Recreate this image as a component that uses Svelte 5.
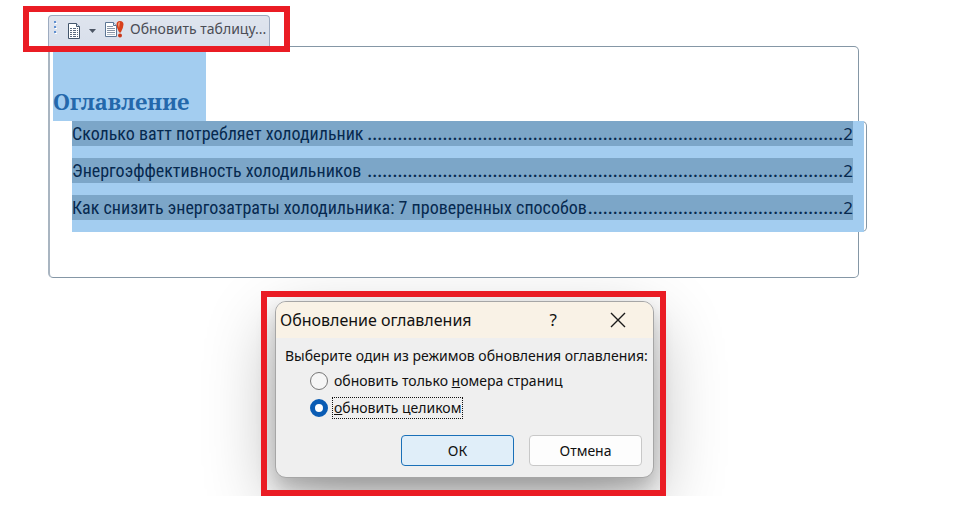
<script>
  import { onMount } from 'svelte';

  const entries = [
    { title: 'Сколько ватт потребляет холодильник', page: 2 },
    { title: 'Энергоэффективность холодильников ', page: 2 },
    { title: 'Как снизить энергозатраты холодильника: 7 проверенных способов', page: 2 },
  ];

  let mode = $state('all');
  let leaderWidths = $state([0, 0, 0]);
  let dotWidth = $state(5);

  // fill the space up to the page number with as many dots as fit
  function dots(width) {
    return '.'.repeat(Math.max(0, Math.floor(width / dotWidth)));
  }

  onMount(() => {
    const ctx = document.createElement('canvas').getContext('2d');
    ctx.font = '500 18px "Roboto Condensed", Roboto, sans-serif';
    dotWidth = ctx.measureText('.'.repeat(100)).width / 100;
  });
</script>

<main>
  <div class="toolbar-row">
    <div class="toolbar">
      <svg class="grip" width="4" height="16" viewBox="0 0 4 16">
        <path d="M1 0h2v2H1zM1 5h2v2H1zM1 10h2v2H1z" fill="#5f8fd0" />
        <path d="M2 2h2v1H2zM2 7h2v1H2zM2 12h2v1H2z" fill="#fff" />
      </svg>
      <button class="tool menu" aria-label="Оглавление">
        <svg width="14" height="16" viewBox="0 0 14 16">
          <path d="M1.5.5h8l3 3v12h-11z" fill="#fff" stroke="#44566c" />
          <path d="M9.5.5v3h3" fill="#dce6f2" stroke="#44566c" />
          <path
            d="M3 5.5h2M6 5.5h3M10 5.5h1M3 7.5h2M6 7.5h3M10 7.5h1M3 9.5h2M6 9.5h3M10 9.5h1M3 11.5h2M6 11.5h3M10 11.5h1M3 13.5h2M6 13.5h3M10 13.5h1"
            stroke="#5c6b80"
          />
        </svg>
        <svg width="7" height="4" viewBox="0 0 7 4">
          <path d="M0 0h7L3.5 4z" fill="#4c5564" />
        </svg>
      </button>
      <button class="tool">
        <svg width="20" height="17" viewBox="0 0 20 17">
          <path d="M1.5 1.5h8l3 3v11h-11z" fill="#fff" stroke="#5c7694" />
          <path d="M9.5 1.5v3h3" fill="#dce6f2" stroke="#5c7694" />
          <path d="M3 5.5h6M3 7.5h8M3 9.5h8M3 11.5h8" stroke="#8794a6" />
          <path d="M3 13.5h8" stroke="#b4bdc8" />
          <path d="M12.5 3.500q0-3.500 3.500-3.500t3.500 3.500q0 3-2.700 8h-1.600q-2.700-5-2.700-8z" fill="#d8401c" />
          <path d="M14 3q0-2 2-2l-1 6q-1-2-1-4z" fill="#f29a78" />
          <circle cx="16" cy="14.500" r="2" fill="#c9381a" />
        </svg>
        <span>Обновить таблицу...</span>
      </button>
    </div>
    <div class="mark toolbar-mark"></div>
  </div>

  <section class="toc">
    <h1>Оглавление</h1>
    <div class="entries">
      <div class="selection">
        {#each entries as entry, i}
          <div class="entry">
            <span class="title">{entry.title}</span>
            <span class="leader" aria-hidden="true" bind:clientWidth={leaderWidths[i]}
              >{dots(leaderWidths[i])}</span
            >
            <span class="page">{entry.page}</span>
          </div>
        {/each}
      </div>
    </div>
  </section>

  <div class="stage">
    <div class="frame">
      <div class="dialog" role="dialog" aria-labelledby="dialog-title">
        <div class="titlebar">
          <h2 id="dialog-title">Обновление оглавления</h2>
          <button class="help">?</button>
          <button class="close" aria-label="Закрыть">
            <svg width="16" height="16" viewBox="0 0 16 16">
              <path d="M1 1l14 14M15 1L1 15" stroke="#1a1a1a" stroke-width="1.4" fill="none" />
            </svg>
          </button>
        </div>
        <fieldset>
          <legend>Выберите один из режимов обновления оглавления:</legend>
          <label>
            <input type="radio" value="pages" bind:group={mode} />
            <span>обновить только <u>н</u>омера страниц</span>
          </label>
          <label>
            <input type="radio" value="all" bind:group={mode} />
            <span class:focused={mode === 'all'}><u>о</u>бновить целиком</span>
          </label>
        </fieldset>
        <div class="actions">
          <button class="primary">ОК</button>
          <button>Отмена</button>
        </div>
      </div>
      <div class="mark"></div>
    </div>
  </div>
</main>

<style>
  :global(body) {
    background: #fff;
  }

  main {
    padding: 15px 101px 10px 48px;
    font-family: 'Noto Sans', sans-serif;
  }

  button {
    font: inherit;
    color: inherit;
    border: 0;
    background: none;
    padding: 0;
  }

  .toolbar-row {
    position: relative;
    width: fit-content;
  }

  .toolbar {
    display: flex;
    align-items: center;
    box-sizing: border-box;
    height: 31px;
    padding: 0 3px 4px 4px;
    border: 1px solid #9dabc0;
    border-bottom: 0;
    border-radius: 4px 4px 0 0;
    background: linear-gradient(#dfe4ee, #d8dfeb);
    color: #4b4d55;
    font-size: 14px;
    line-height: 20px;
  }

  .tool {
    display: flex;
    align-items: center;
    gap: 6px;
    white-space: nowrap;
  }

  .menu {
    gap: 8px;
    padding: 4px 8px 0 10px;
  }

  /* red markers over the toolbar and the dialog */
  .mark {
    position: absolute;
    inset: 0;
    border: 6px solid #ea1c24;
    pointer-events: none;
    z-index: 1;
  }

  .toolbar-mark {
    inset: -9px -20px -6px -25px;
  }

  .toc {
    box-sizing: border-box;
    padding: 0 0 45px 3px;
    border: 1px solid #8597a6;
    border-left: 2px solid #a9b5c1;
    border-radius: 0 5px 5px 5px;
  }

  h1 {
    box-sizing: border-box;
    width: fit-content;
    height: 74px;
    margin: 0;
    padding: 40px 16px 0 0;
    background: #a3cdf0;
    color: #2468ab;
    font-family: 'Noto Serif', 'Liberation Serif', serif;
    font-size: 22px;
    font-weight: 700;
    line-height: 28px;
  }

  .entries {
    margin: 0 -9px 0 19px;
    padding-right: 2px;
    border: 1px solid #8597a6;
    border-left: 0;
    border-radius: 0 5px 5px 0;
    background: #fff;
  }

  .selection {
    margin: -1px 0;
    padding-right: 11px;
    background: #a3cdf0;
  }

  .entry {
    display: flex;
    height: 25px;
    border-bottom: 12px solid #a3cdf0;
    background: #7ca6c8;
    color: #06294f;
    font-family: 'Roboto Condensed', Roboto, sans-serif;
    font-size: 18px;
    line-height: 25px;
  }

  .title {
    white-space: pre;
  }

  .leader {
    flex: 1;
    width: 0;
    font-weight: 500;
    text-align: right;
    white-space: nowrap;
  }

  .page {
    font-family: 'Noto Sans', sans-serif;
    font-size: 17px;
  }

  .stage {
    display: flex;
    justify-content: center;
    padding: 13px 0 0 20px;
    overflow: hidden;
  }

  .frame {
    position: relative;
    padding: 10px 12px 18px 14px;
  }

  .dialog {
    width: 377px;
    border: 1px solid #a6a6a6;
    border-radius: 11px;
    background: #efefef;
    box-shadow: 0 10px 20px rgba(0, 0, 0, 0.2), 0 24px 70px rgba(0, 0, 0, 0.3);
    color: #111;
    font-size: 14px;
    line-height: 20px;
  }

  .titlebar {
    display: flex;
    align-items: center;
    height: 36px;
    padding: 0 27px 0 4px;
    border-radius: 10px 10px 0 0;
    background: #f9f2e6;
  }

  h2 {
    flex: 1;
    margin: 0;
    font-size: 16px;
    font-weight: 400;
  }

  .help {
    margin-right: 53px;
    font-size: 17px;
  }

  .close {
    display: flex;
  }

  fieldset {
    margin: 0;
    padding: 8px 8px 0 9px;
    border: 0;
  }

  legend {
    float: left;
    padding: 0 0 1px;
    white-space: nowrap;
  }

  label {
    display: flex;
    clear: both;
    align-items: center;
    gap: 4px;
    height: 27px;
    padding-left: 25px;
  }

  label span {
    padding: 0 1px;
    border: 1px dotted transparent;
  }

  label .focused {
    border-color: #111;
  }

  input {
    appearance: none;
    box-sizing: border-box;
    width: 18px;
    height: 18px;
    margin: 0;
    border: 1px solid #767676;
    border-radius: 50%;
    background: #f6f6f6;
  }

  input:checked {
    border: 5px solid #0a5cb4;
    background: #fff;
  }

  .actions {
    display: flex;
    justify-content: flex-end;
    gap: 15px;
    padding: 14px 11px 11px;
  }

  .actions button {
    box-sizing: border-box;
    width: 113px;
    height: 31px;
    border: 1px solid #c8c8c8;
    border-radius: 4px;
    background: #fdfdfd;
  }

  .actions .primary {
    border: 1px solid #1a70b8;
    background: #e0eef9;
  }
</style>
